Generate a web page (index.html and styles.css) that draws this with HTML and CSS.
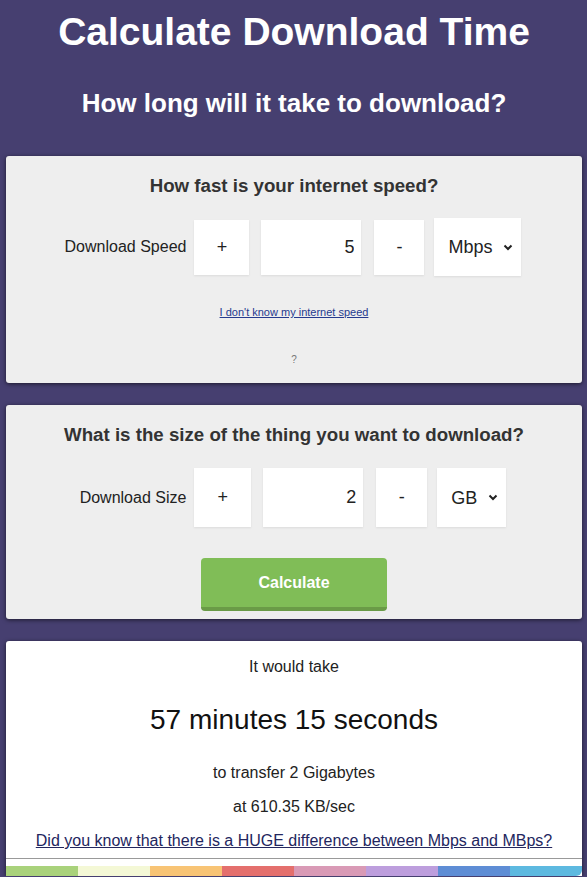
FILE: index.html
```html
<!DOCTYPE html>
<html lang="en">
<head>
    <meta charset="UTF-8">
    <meta name="viewport" content="width=device-width, initial-scale=1.0">
    <title>Calculate Download Time</title>
    <link rel="stylesheet" href="styles.css">
</head>
<body>
    <h1>Calculate Download Time</h1>
    <h2>How long will it take to download?</h2>

    <div class="card card-speed">
        <h3>How fast is your internet speed?</h3>
        <div class="row">
            <label for="speed">Download Speed</label>
            <button class="step plus">+</button>
            <input type="text" id="speed" class="value" value="5">
            <button class="step minus">-</button>
            <select class="unit unit-speed">
                <option>Mbps</option>
                <option>Kbps</option>
                <option>Gbps</option>
            </select>
        </div>
        <a href="#" class="small-link">I don't know my internet speed</a>
        <p class="hint">?</p>
    </div>

    <div class="card card-size">
        <h3>What is the size of the thing you want to download?</h3>
        <div class="row row-size">
            <label for="size">Download Size</label>
            <button class="step plus">+</button>
            <input type="text" id="size" class="value" value="2">
            <button class="step minus">-</button>
            <select class="unit unit-size">
                <option>GB</option>
                <option>MB</option>
                <option>TB</option>
            </select>
        </div>
        <button class="calc">Calculate</button>
    </div>

    <div class="card result">
        <p class="take">It would take</p>
        <p class="time">57 minutes 15 seconds</p>
        <p class="line first">to transfer 2 Gigabytes</p>
        <p class="line">at 610.35 KB/sec</p>
        <a href="#" class="big-link">Did you know that there is a HUGE difference between Mbps and MBps?</a>
        <hr>
        <div class="stripe">
            <span class="s1"></span><span class="s2"></span><span class="s3"></span><span class="s4"></span>
            <span class="s5"></span><span class="s6"></span><span class="s7"></span><span class="s8"></span>
        </div>
    </div>
</body>
</html>
```

FILE: styles.css
```css
body {
    font-family: "Liberation Sans", Arial, sans-serif;
    margin: 0;
    padding: 0 5px 0 6px;
    background-color: #463f70;
    color: #222;
    text-align: center;
}
h1 {
    color: #fff;
    font-size: 39px;
    line-height: 44px;
    margin: 10px 0 0;
}
h2 {
    color: #fff;
    font-size: 26px;
    line-height: 30px;
    margin: 34px 0 0;
}
.card {
    background-color: #eee;
    border-radius: 3px;
    box-shadow: 0 1px 4px rgba(0, 0, 0, 0.6);
    margin-bottom: 22px;
}
.card-speed {
    margin-top: 38px;
    padding: 19px 0 16px;
}
.card h3 {
    color: #333;
    font-size: 18.7px;
    line-height: 22px;
    margin: 0;
}
.row {
    display: flex;
    justify-content: center;
    align-items: center;
    margin-top: 21px;
    padding-right: 2px;
}
.row label {
    font-size: 16px;
    margin-right: 8px;
}
.step, .value, .unit {
    font-family: inherit;
    background-color: #fff;
    border: none;
    box-shadow: 0 1px 2px rgba(0, 0, 0, 0.08);
    font-size: 18px;
    color: #222;
    height: 55px;
    padding: 0;
}
.step {
    width: 55px;
}
.plus {
    margin-right: 12px;
}
.value {
    width: 100px;
    text-align: right;
    padding-right: 7px;
    box-sizing: border-box;
}
.minus {
    width: 50px;
    margin-left: 13px;
    margin-right: 10px;
}
.unit {
    -webkit-appearance: none;
    appearance: none;
    height: 58px;
    width: 87px;
    padding-left: 14px;
    background-image: url("data:image/svg+xml;utf8,<svg xmlns='http://www.w3.org/2000/svg' width='10' height='7' viewBox='0 0 10 7'><path d='M1.5 1.5 L5 5 L8.5 1.5' fill='none' stroke='%23222' stroke-width='2'/></svg>");
    background-repeat: no-repeat;
    background-position: right 8px center;
}
.small-link {
    display: block;
    font-size: 11px;
    line-height: 14px;
    color: #253a8f;
    margin-top: 29px;
}
.hint {
    font-size: 10px;
    line-height: 14px;
    color: #777;
    margin: 34px 0 0;
}
.card-size {
    padding: 19px 0 8px;
}
.row-size {
    margin-top: 22px;
}
.row-size .step, .row-size .value {
    height: 59px;
}
.row-size .plus {
    width: 57px;
}
.row-size .minus {
    width: 51px;
}
.row-size .unit {
    width: 69px;
    height: 59px;
    padding-left: 14px;
}
.calc {
    display: block;
    margin: 31px auto 0;
    width: 186px;
    height: 53px;
    background-color: #80bd57;
    border: none;
    border-bottom: 4px solid #6a9b47;
    border-radius: 4px;
    color: #fff;
    font-family: inherit;
    font-size: 16px;
    font-weight: bold;
}
.result {
    background-color: #fff;
    padding-top: 16px;
    margin-bottom: 0;
    border-radius: 3px 3px 0 0;
}
.result p {
    margin: 0;
    font-size: 16px;
    line-height: 20px;
}
.result .time {
    font-size: 28px;
    line-height: 32px;
    margin-top: 27px;
    color: #111;
}
.result .first {
    margin-top: 27px;
}
.result .line + .line {
    margin-top: 14px;
}
.big-link {
    display: block;
    margin-top: 14px;
    font-size: 16px;
    line-height: 20px;
    color: #23265e;
}
.result hr {
    border: none;
    border-top: 1px solid #999;
    margin: 7px 0 0;
}
.stripe {
    display: flex;
    height: 10px;
    margin-top: 7px;
    border-radius: 0 0 6px 0;
    overflow: hidden;
}
.stripe span {
    flex: 1;
}
.s1 { background-color: #a9d27b; }
.s2 { background-color: #f4f8d6; }
.s3 { background-color: #f8c475; }
.s4 { background-color: #e46f6d; }
.s5 { background-color: #d99ab6; }
.s6 { background-color: #bd9edd; }
.s7 { background-color: #5e8dd5; }
.s8 { background-color: #5db9e0; }
```
